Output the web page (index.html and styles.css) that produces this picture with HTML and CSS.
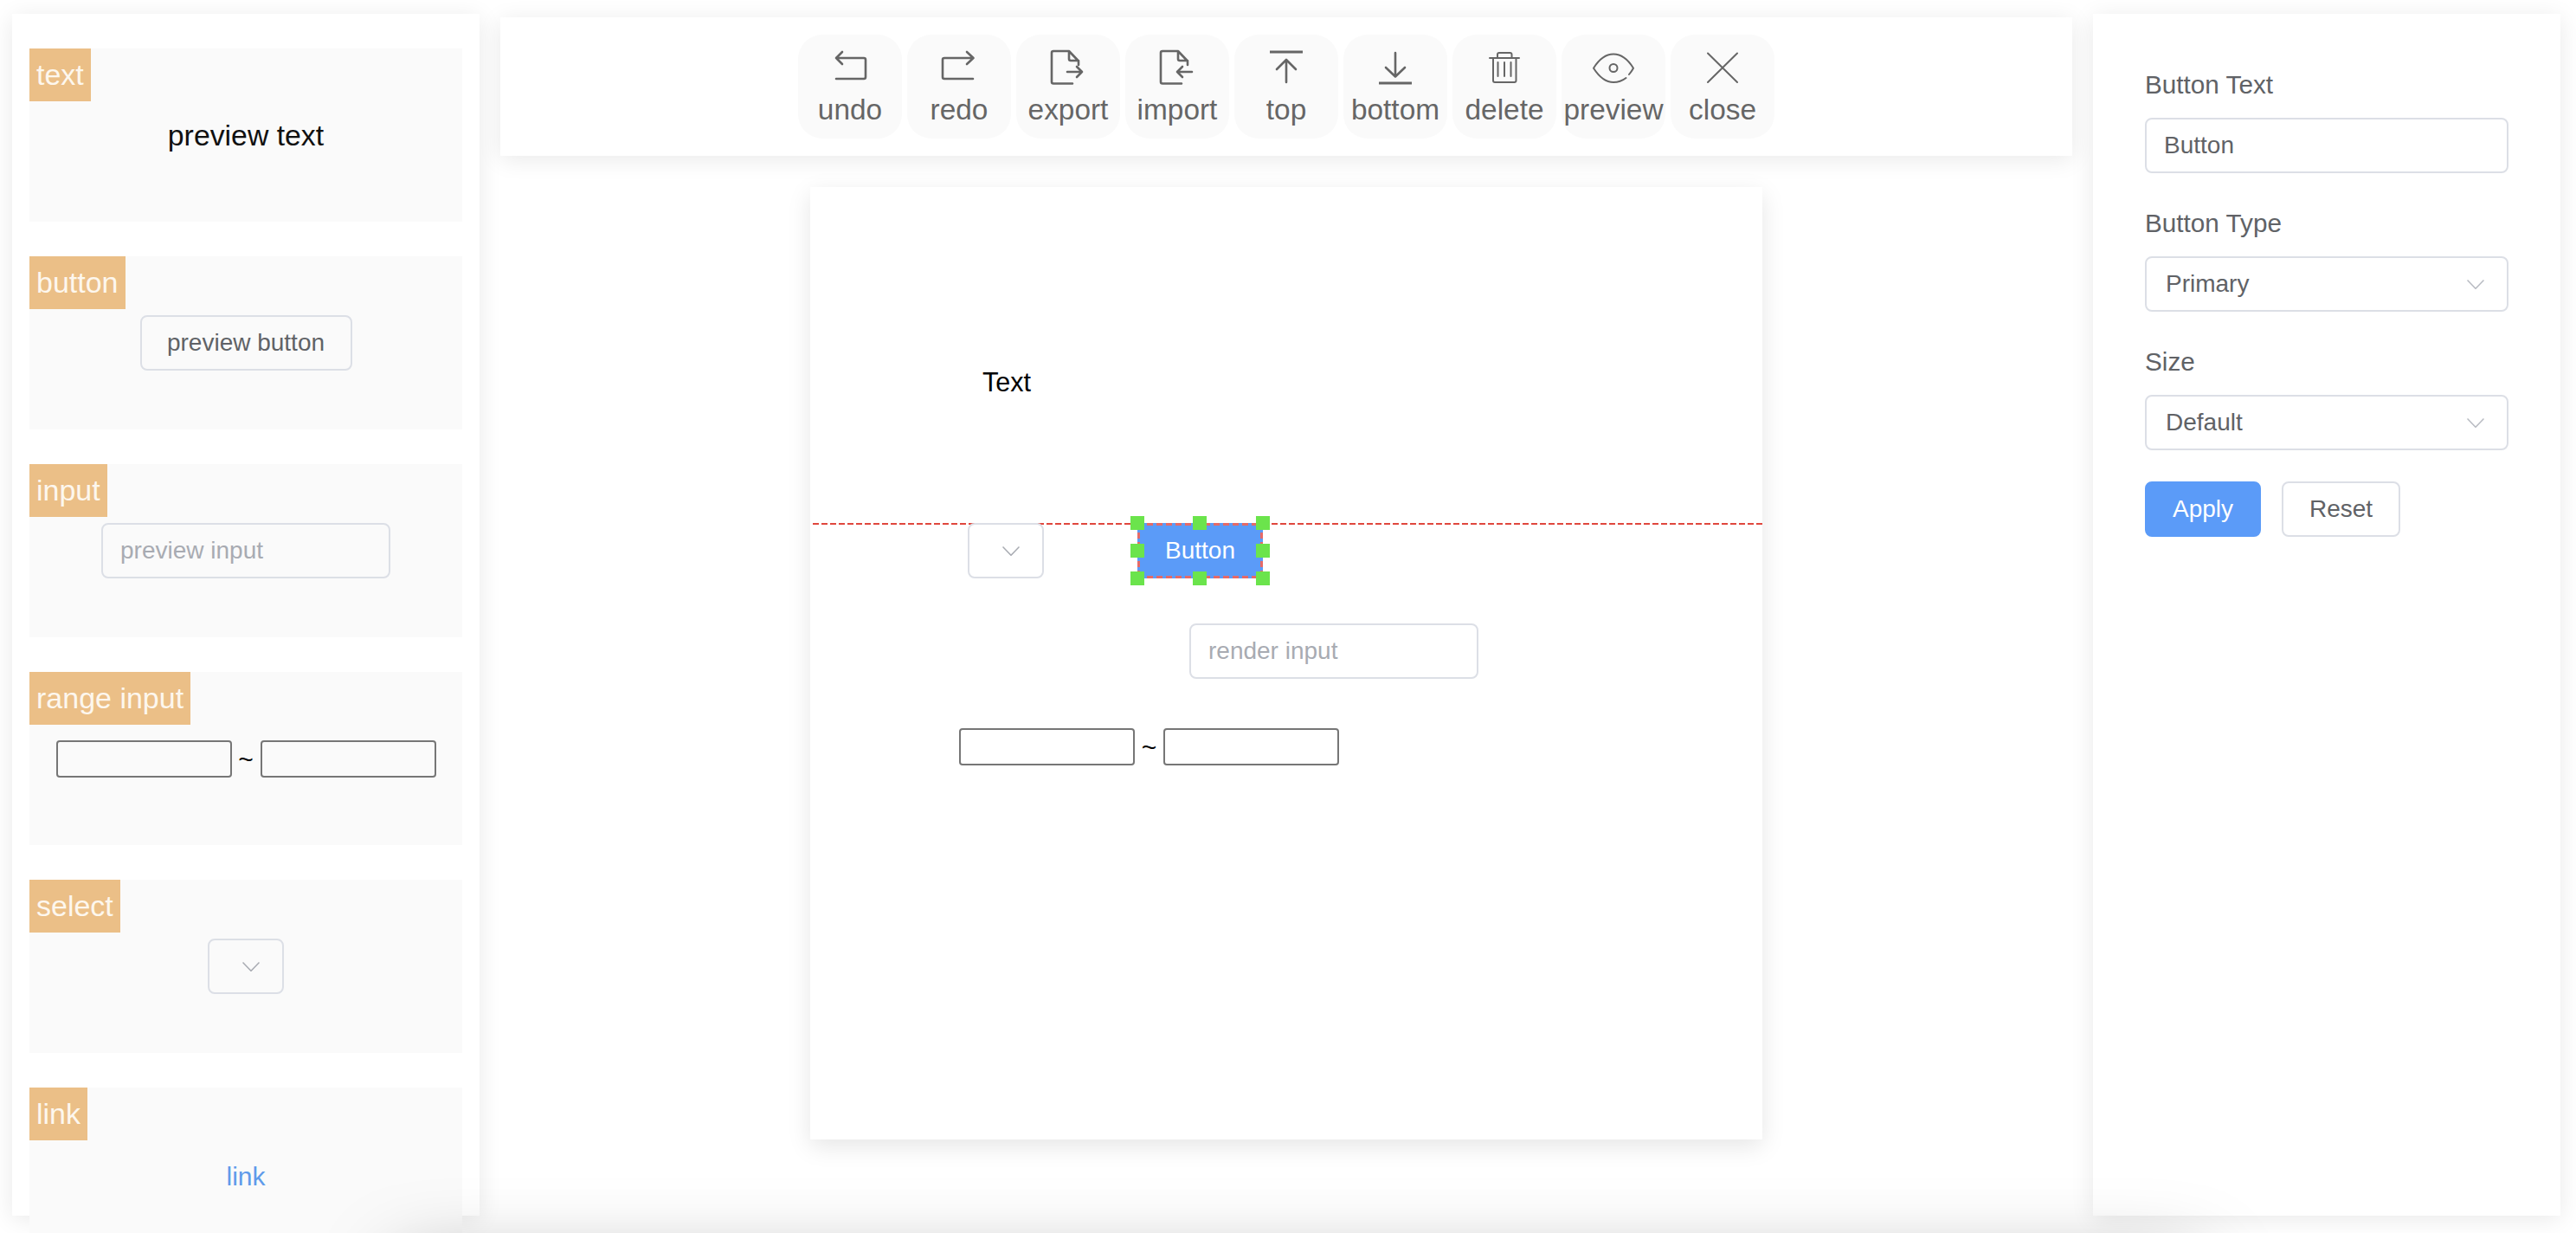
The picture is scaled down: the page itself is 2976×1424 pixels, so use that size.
FILE: index.html
```html
<!DOCTYPE html>
<html lang="en">
<head>
<meta charset="utf-8">
<title>Form designer</title>
<link rel="stylesheet" href="styles.css">
</head>
<body>
<div class="stage">
<div class="app">
  <aside class="panel palette">
    <section class="item">
      <span class="tag">text</span>
      <span class="preview-text">preview text</span>
    </section>
    <section class="item">
      <span class="tag">button</span>
      <button class="btn btn-preview">preview button</button>
    </section>
    <section class="item">
      <span class="tag">input</span>
      <input class="field field-fixed" placeholder="preview input">
    </section>
    <section class="item">
      <span class="tag">range input</span>
      <div class="range"><input class="range-box"><span class="tilde">~</span><input class="range-box"></div>
    </section>
    <section class="item">
      <span class="tag">select</span>
      <div class="select select-empty"><svg class="chev" viewBox="0 0 20 11"><path d="M.5.5 10 10.3 19.5.5"/></svg></div>
    </section>
    <section class="item">
      <span class="tag">link</span>
      <a class="link">link</a>
    </section>
  </aside>

  <main class="middle">
    <nav class="toolbar">
      <button class="tool"><svg class="ico" viewBox="0 0 48 48"><path d="M15 7 8 14l7 7M8 14h32q2 0 2 2v20q0 2-2 2H8"/></svg><span>undo</span></button>
      <button class="tool"><svg class="ico" viewBox="0 0 48 48"><path d="M33 7l7.500 7-7.500 7M40.500 14H7q-2 0-2 2v20q0 2 2 2h33"/></svg><span>redo</span></button>
      <button class="tool"><svg class="ico" viewBox="0 0 48 48"><path d="M29 43.500H7q-2 0-2-2V8q0-2 2-2h18l11 11.500V22M25 6v9q0 2 2 2h9M23 30h17M34 24l6 6-6 6"/></svg><span>export</span></button>
      <button class="tool"><svg class="ico" viewBox="0 0 48 48"><path d="M29 43.500H7q-2 0-2-2V8q0-2 2-2h18l11 11.500V22M25 6v9q0 2 2 2h9M41 30H24M30 24l-6 6 6 6"/></svg><span>import</span></button>
      <button class="tool"><svg class="ico" viewBox="0 0 48 48"><path class="bar" d="M5 7h38"/><path d="M24 42V16M13 27l11-11 11 11"/></svg><span>top</span></button>
      <button class="tool"><svg class="ico" viewBox="0 0 48 48"><path d="M24 8v27M13 25l11 10.500L35 25"/><path class="bar" d="M5 43h38"/></svg><span>bottom</span></button>
      <button class="tool"><svg class="ico ico-thin" viewBox="0 0 48 48"><path d="M7 14h34M16 14V10q0-2 2-2h12.500q2 0 2 2v4M11 14v26q0 2 2 2h22.500q2 0 2-2V14M16.500 19v16M24 19v16M31.500 19v16"/></svg><span>delete</span></button>
      <button class="tool"><svg class="ico ico-thin" viewBox="0 0 48 48"><path d="M38.500 37C34 40.500 29 42 24 42 15 42 7 35 1 25.700 7 16 15 9.500 24 9.500s17 6.500 23 16.200c-1.500 2.800-3 4.800-5 7.300"/><circle cx="24" cy="25.500" r="4.500"/></svg><span>preview</span></button>
      <button class="tool"><svg class="ico ico-thin" viewBox="0 0 48 48"><path d="M7 8.500 41 42M41 8.500 7 42"/></svg><span>close</span></button>
    </nav>

    <div class="canvas">
      <span class="node node-text">Text</span>
      <div class="guide"></div>
      <div class="select select-empty node node-select"><svg class="chev" viewBox="0 0 20 11"><path d="M.5.5 10 10.3 19.5.5"/></svg></div>
      <div class="node node-button">
        <button class="btn-selected">Button</button>
        <i class="handle h-tl"></i><i class="handle h-tc"></i><i class="handle h-tr"></i>
        <i class="handle h-ml"></i><i class="handle h-mr"></i>
        <i class="handle h-bl"></i><i class="handle h-bc"></i><i class="handle h-br"></i>
      </div>
      <input class="field field-fixed node node-input" placeholder="render input">
      <div class="range node node-range"><input class="range-box"><span class="tilde">~</span><input class="range-box"></div>
    </div>
  </main>

  <aside class="panel props">
    <label class="prop-label">Button Text</label>
    <input class="field field-full" value="Button">
    <label class="prop-label">Button Type</label>
    <div class="select select-full"><span>Primary</span><svg class="chev chev-light" viewBox="0 0 20 11"><path d="M.5.5 10 10.3 19.500.5"/></svg></div>
    <label class="prop-label">Size</label>
    <div class="select select-full"><span>Default</span><svg class="chev chev-light" viewBox="0 0 20 11"><path d="M.5.5 10 10.3 19.500.5"/></svg></div>
    <div class="actions">
      <button class="btn btn-primary">Apply</button>
      <button class="btn btn-plain">Reset</button>
    </div>
  </aside>
</div>
<div class="bottom-glow"></div>
</div>
</body>
</html>
```

FILE: styles.css
```css
* { box-sizing: border-box; }
html, body { margin: 0; height: 1424px; background: #fff; }
body { font-family: "Liberation Sans", Arial, sans-serif; color: #606266; }

.stage { position: relative; height: 1424px; overflow: hidden; contain: paint; }
.app { display: flex; height: 1424px; padding-left: 14px; }

.panel {
  width: 540px;
  height: 1388px;
  margin-top: 16px;
  background: #fff;
  box-shadow: 0 4px 26px rgba(0, 0, 0, .09);
  flex-shrink: 0;
}

/* palette */
.palette { display: flex; flex-direction: column; gap: 40px; padding: 40px 20px; }
.item {
  position: relative;
  flex: 0 0 200px;
  display: flex;
  align-items: center;
  justify-content: center;
  background: #fafafa;
}
.tag {
  position: absolute;
  left: 0;
  top: 0;
  height: 61px;
  line-height: 61px;
  padding: 0 8px;
  font-size: 34px;
  color: #fdf7ee;
  background: #ebbf87;
}
.preview-text { font-size: 33.8px; color: #111; }
.link { font-size: 30px; color: #5f9bea; padding-top: 6px; }

/* controls */
.btn {
  height: 64px;
  padding: 0 30px;
  font: 28px "Liberation Sans", Arial, sans-serif;
  color: #606266;
  background: transparent;
  border: 2px solid #dcdfe6;
  border-radius: 8px;
}
.btn-preview { width: 245px; padding: 0; }
.field {
  height: 64px;
  padding: 0 20px;
  font: 28px "Liberation Sans", Arial, sans-serif;
  color: #606266;
  background: transparent;
  border: 2px solid #dcdfe6;
  border-radius: 8px;
  outline: none;
}
.field::placeholder { color: #a8abb2; opacity: 1; }
.field-fixed { width: 334px; }
.field-full { width: 420px; display: block; }

.range { display: flex; align-items: center; }
.range-box {
  width: 203px;
  height: 43px;
  background: transparent;
  border: 2px solid #767676;
  border-radius: 4px;
  outline: none;
}
.tilde { width: 33px; text-align: center; font-size: 30px; line-height: 43px; color: #000; }

.select {
  height: 64px;
  display: flex;
  align-items: center;
  justify-content: space-between;
  border: 2px solid #dcdfe6;
  border-radius: 8px;
  font-size: 28px;
}
.select-empty { width: 88px; justify-content: flex-end; padding-right: 26px; }
.select-full { width: 420px; padding: 0 26px 0 22px; }
.chev { width: 20px; height: 11px; fill: none; stroke: #a8abb2; stroke-width: 1.5; }
.chev-light { stroke: #b8bbc2; }

/* middle */
.middle {
  width: 1816px;
  margin-left: 24px;
  padding-top: 20px;
  display: flex;
  flex-direction: column;
  align-items: center;
  flex-shrink: 0;
}
.toolbar {
  width: 100%;
  height: 160px;
  display: flex;
  align-items: center;
  justify-content: center;
  gap: 6px;
  background: #fff;
  box-shadow: 0 4px 26px rgba(0, 0, 0, .09);
}
.tool {
  width: 120px;
  height: 120px;
  padding: 13px 0 0;
  display: flex;
  flex-direction: column;
  align-items: center;
  gap: 6px;
  background: #fafafa;
  border: 0;
  border-radius: 28px;
  font: 33.4px/40px "Liberation Sans", Arial, sans-serif;
  color: #666;
}
.ico { width: 48px; height: 48px; fill: none; stroke: #666; stroke-width: 2.6; stroke-linejoin: round; stroke-linecap: round; }
.ico-thin { stroke-width: 2; }
.bar { stroke-width: 3; stroke-linecap: butt; }

/* canvas */
.canvas {
  position: relative;
  width: 1100px;
  height: 1100px;
  margin-top: 36px;
  background: #fff;
  box-shadow: 0 8px 26px rgba(0, 0, 0, .1);
  flex-shrink: 0;
}
.node { position: absolute; }
.node-text { left: 199px; top: 205px; font-size: 30.5px; line-height: 40px; color: #000; }
.guide {
  position: absolute;
  left: 0;
  right: 0;
  top: 388px;
  height: 2px;
  background: repeating-linear-gradient(270deg, #e0483e 0 7px, transparent 7px 10px);
}
.node-select { left: 182px; top: 388px; background: #fff; }
.node-button { left: 378px; top: 388px; width: 145px; height: 64px; }
.btn-selected {
  display: block;
  width: 100%;
  height: 100%;
  padding: 0;
  font: 28px "Liberation Sans", Arial, sans-serif;
  color: #fff;
  border: 0;
  background:
    repeating-linear-gradient(90deg, #e56a68 0 7px, transparent 7px 11px) 0 0 / 100% 3px no-repeat,
    repeating-linear-gradient(90deg, #e56a68 0 7px, transparent 7px 11px) 0 100% / 100% 3px no-repeat,
    repeating-linear-gradient(180deg, #e56a68 0 7px, transparent 7px 11px) 0 0 / 3px 100% no-repeat,
    repeating-linear-gradient(180deg, #e56a68 0 7px, transparent 7px 11px) 100% 0 / 3px 100% no-repeat,
    #5b9bf8;
}
.handle { position: absolute; width: 16px; height: 16px; background: #6be44c; }
.h-tl, .h-ml, .h-bl { left: -8px; }
.h-tc, .h-bc { left: 64px; }
.h-tr, .h-mr, .h-br { right: -8px; }
.h-tl, .h-tc, .h-tr { top: -8px; }
.h-ml, .h-mr { top: 24px; }
.h-bl, .h-bc, .h-br { bottom: -8px; }
.node-input { left: 438px; top: 504px; }
.node-range { left: 172px; top: 625px; }

/* properties */
.props { margin-left: 24px; padding: 60px 60px 0; }
.prop-label { display: block; height: 44px; line-height: 44px; margin-bottom: 16px; font-size: 29.7px; }
.props .prop-label:not(:first-child) { margin-top: 36px; }
.actions { display: flex; gap: 24px; margin-top: 36px; }
.btn-primary { color: #fff; background: #5b9bf8; border-color: #5b9bf8; width: 134px; padding: 0; }
.btn-plain { width: 137px; padding: 0; }

.bottom-glow {
  position: absolute;
  left: 460px;
  width: 2080px;
  top: 1460px;
  height: 100px;
  box-shadow: 0 0 90px rgba(0, 0, 0, .35);
  pointer-events: none;
}
```
